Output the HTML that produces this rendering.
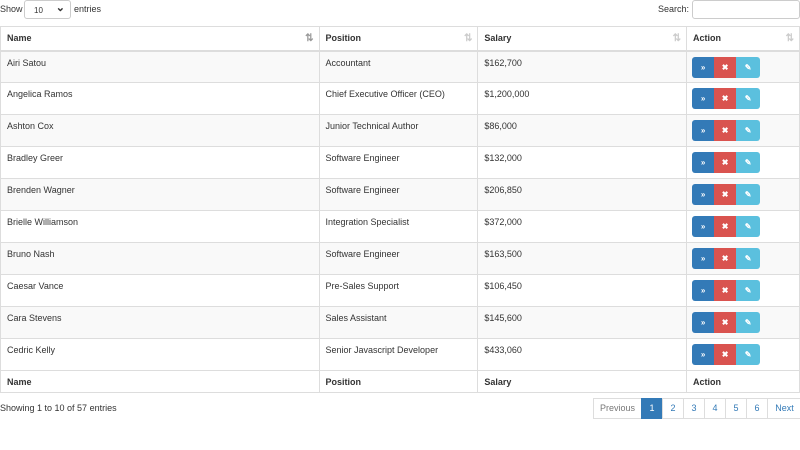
<!DOCTYPE html>
<html><head><style>
*{box-sizing:border-box}
body{margin:0;width:800px;height:450px;background:#fff;font-family:"Liberation Sans",sans-serif;font-size:9px;color:#333;position:relative;overflow:hidden}
.top{position:absolute;top:0;left:0;right:0;height:20px}
.sel{position:absolute;left:24px;top:0;width:47px;height:19px;border:1px solid #ccc;border-radius:3px;font-size:8px;padding:5px 0 0 9px}
.sel:after{content:"⌄";position:absolute;right:5px;top:0px;font-size:11px;font-weight:bold}
table{position:absolute;top:26px;left:0;width:800px;border-collapse:collapse;border:1px solid #ddd}
th,td{border-left:1px solid #ddd;text-align:left;vertical-align:top;padding:0 6px}
th{height:24px;font-weight:bold;vertical-align:middle;position:relative;border-bottom:2px solid #ddd}
thead th:after{content:"⇅";position:absolute;right:5px;top:6px;color:#ccc;font-size:10px}
thead th.s:after{content:"⇅";color:#999}
td{height:32px;padding-top:6px;border-top:1px solid #ddd}
tbody tr:nth-child(odd) td{background:#f9f9f9}
tfoot th{border-top:1px solid #ddd;border-bottom:none;height:22px}
.b{display:inline-flex;margin-top:-1px;margin-left:-1px}
.b span{width:22px;height:21px;display:inline-block;color:#fff;text-align:center;line-height:21px;font-size:8px;font-weight:bold}
.b .u{background:#337ab7;border-radius:3px 0 0 3px}
.b .x{background:#d9534f}
.b .e{background:#5bc0de;border-radius:0 3px 3px 0;width:24px}
.pg{position:absolute;top:398px;left:594px;display:flex;height:21px}
.pg span{border:1px solid #ddd;margin-left:-1px;line-height:19px;width:22px;text-align:center;color:#337ab7}
.pg .a{background:#337ab7;color:#fff;border-color:#337ab7}
</style></head><body>
<div class="top"><span style="position:absolute;left:0;top:4px">Show</span><div class="sel">10</div><span style="position:absolute;left:74px;top:4px">entries</span>
<span style="position:absolute;left:658px;top:4px">Search:</span><div style="position:absolute;left:692px;top:0;width:108px;height:19px;border:1px solid #ccc;border-radius:3px"></div></div>
<table>
<colgroup><col style="width:319px"><col style="width:159px"><col style="width:209px"><col style="width:113px"></colgroup>
<thead><tr><th class="s">Name</th><th>Position</th><th>Salary</th><th>Action</th></tr></thead>
<tbody>
<tr><td>Airi Satou</td><td>Accountant</td><td>$162,700</td><td><div class="b"><span class="u">»</span><span class="x">✖</span><span class="e">✎</span></div></td></tr>
<tr><td>Angelica Ramos</td><td>Chief Executive Officer (CEO)</td><td>$1,200,000</td><td><div class="b"><span class="u">»</span><span class="x">✖</span><span class="e">✎</span></div></td></tr>
<tr><td>Ashton Cox</td><td>Junior Technical Author</td><td>$86,000</td><td><div class="b"><span class="u">»</span><span class="x">✖</span><span class="e">✎</span></div></td></tr>
<tr><td>Bradley Greer</td><td>Software Engineer</td><td>$132,000</td><td><div class="b"><span class="u">»</span><span class="x">✖</span><span class="e">✎</span></div></td></tr>
<tr><td>Brenden Wagner</td><td>Software Engineer</td><td>$206,850</td><td><div class="b"><span class="u">»</span><span class="x">✖</span><span class="e">✎</span></div></td></tr>
<tr><td>Brielle Williamson</td><td>Integration Specialist</td><td>$372,000</td><td><div class="b"><span class="u">»</span><span class="x">✖</span><span class="e">✎</span></div></td></tr>
<tr><td>Bruno Nash</td><td>Software Engineer</td><td>$163,500</td><td><div class="b"><span class="u">»</span><span class="x">✖</span><span class="e">✎</span></div></td></tr>
<tr><td>Caesar Vance</td><td>Pre-Sales Support</td><td>$106,450</td><td><div class="b"><span class="u">»</span><span class="x">✖</span><span class="e">✎</span></div></td></tr>
<tr><td>Cara Stevens</td><td>Sales Assistant</td><td>$145,600</td><td><div class="b"><span class="u">»</span><span class="x">✖</span><span class="e">✎</span></div></td></tr>
<tr><td>Cedric Kelly</td><td>Senior Javascript Developer</td><td>$433,060</td><td><div class="b"><span class="u">»</span><span class="x">✖</span><span class="e">✎</span></div></td></tr>
</tbody>
<tfoot><tr><th>Name</th><th>Position</th><th>Salary</th><th>Action</th></tr></tfoot>
</table>
<div style="position:absolute;left:0;top:403px">Showing 1 to 10 of 57 entries</div>
<div class="pg"><span style="color:#777;width:49px">Previous</span><span class="a">1</span><span>2</span><span>3</span><span>4</span><span>5</span><span>6</span><span style="width:35px">Next</span></div>
</body></html>
